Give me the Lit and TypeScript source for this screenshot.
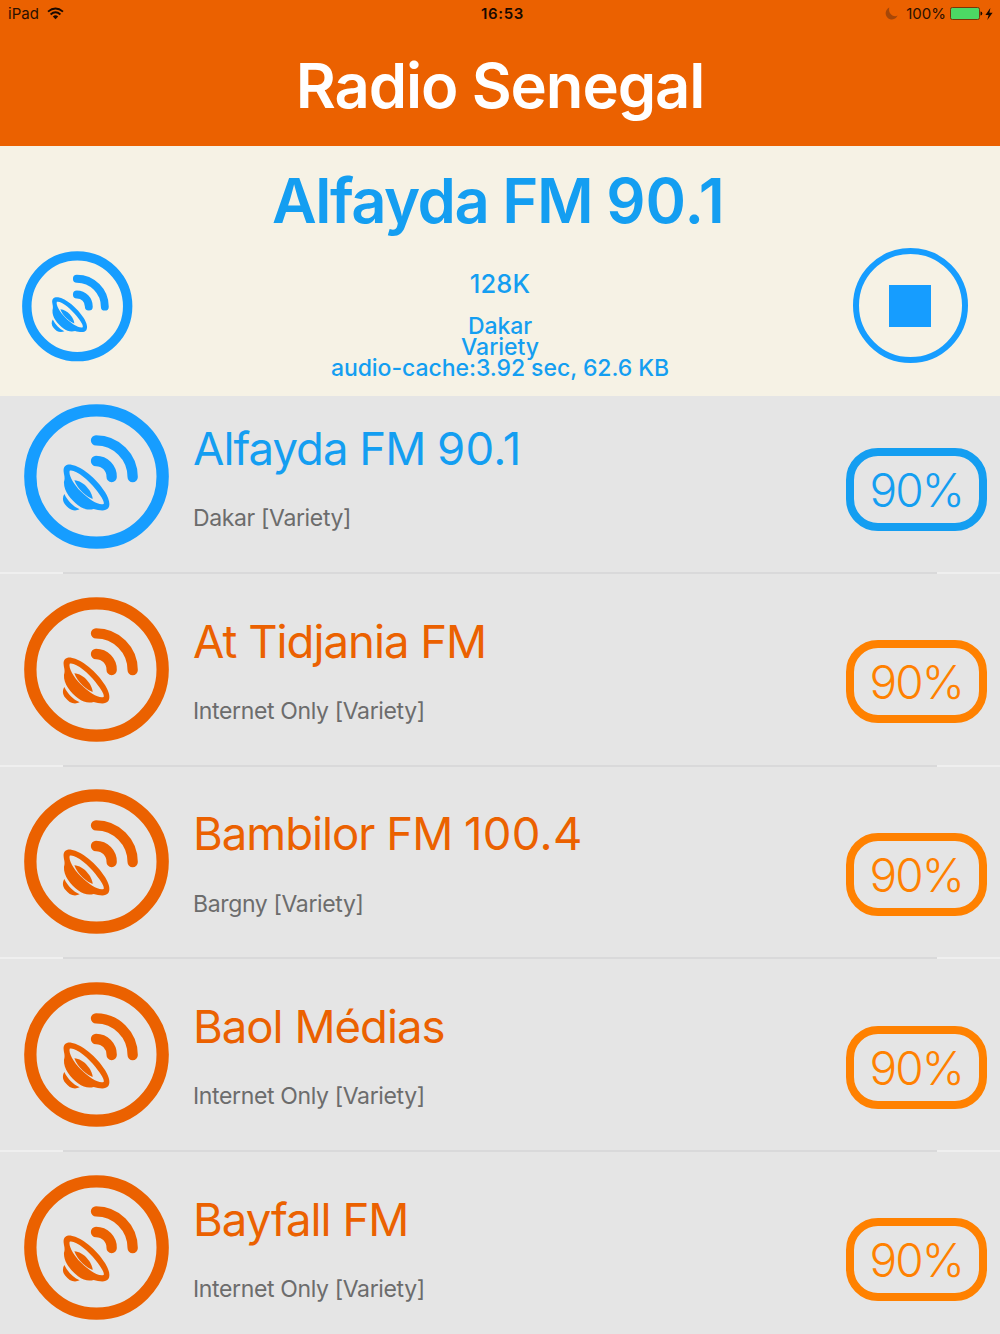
import { LitElement, html, css } from "lit";
import { customElement, property } from "lit/decorators.js";

interface Station {
  name: string;
  frequency?: string;
  place: string;
  genre: string;
  score: number;
}

const STATIONS: Station[] = [
  { name: "Alfayda FM", frequency: "90.1", place: "Dakar", genre: "Variety", score: 90 },
  { name: "At Tidjania FM", place: "Internet Only", genre: "Variety", score: 90 },
  { name: "Bambilor FM", frequency: "100.4", place: "Bargny", genre: "Variety", score: 90 },
  { name: "Baol Médias", place: "Internet Only", genre: "Variety", score: 90 },
  { name: "Bayfall FM", place: "Internet Only", genre: "Variety", score: 90 },
];

@customElement("radio-icon")
class RadioIcon extends LitElement {
  static styles = css`
    :host { display: block; }
    .icon { display: block; width: 100%; height: 100%; }
    .line { fill: none; stroke: currentColor; stroke-linecap: round; }
    .ring { stroke-width: 37; }
    .wave { stroke-width: 31; }
    .solid { fill: currentColor; fill-rule: evenodd; }
  `;
  render() {
    return html`<svg class="icon" viewBox="43 19 435 435">
      <circle class="line ring" cx="260.500" cy="236.500" r="198.500" />
      <path class="line wave" d="M259 128A110 110 0 0 1 369 238M259 190A47 47 0 0 1 306 238" />
      <path class="solid" d="M162 222C160 206 170 199 185 201C215 205 262 244 286 283C298 303 303 320 296 331C288 342 268 338 252 334C238 338 222 336 205 323C183 305 161 280 163 252C167 240 163 232 162 222ZM180 219C197 214 235 245 258 275C275 297 285 312 282 319C268 324 240 308 213 281C192 259 176 232 180 219Z" />
      <path class="solid" d="M194 248C223 250 248 283 249 304C234 300 203 275 194 248Z" />
      <path class="solid" d="M164 289C158 299 158 311 167 321C178 335 192 343 210 335C190 326 175 311 164 289Z" />
    </svg>`;
  }
}

@customElement("app-root")
class AppRoot extends LitElement {
  @property({ type: Number }) playing = 0;

  static styles = css`
    :host {
      display: block;
      width: 1000px;
      height: 1334px;
      overflow: hidden;
      background: #e5e5e5;
      font-family: Inter, "Liberation Sans", sans-serif;
      white-space: nowrap;
    }
    .top { height: 146px; background: #eb6100; color: #fff; }
    .status {
      display: grid;
      grid-template-columns: 1fr auto 1fr;
      align-items: center;
      height: 27px;
      padding: 0 7px 0 8px;
      font-size: 15px;
      color: #2a1000;
    }
    .left, .right { display: flex; align-items: center; }
    .right { justify-content: flex-end; }
    .wifi { width: 17px; height: 13px; margin-left: 8px; }
    .clock { font-weight: 600; color: #180900; letter-spacing: 0.7px; margin-left: 4px; }
    .moon { width: 13px; height: 13px; margin-right: 8px; }
    .battery { width: 33px; height: 13px; margin-left: 4px; }
    .bolt { width: 8px; height: 12px; margin-left: 2px; }
    .title {
      margin: 0;
      padding-top: 22px;
      line-height: 74px;
      text-align: center;
      font-size: 61.5px;
      font-weight: 600;
      letter-spacing: -1.1px;
    }
    .player {
      display: grid;
      grid-template-columns: 200px 1fr 200px;
      height: 250px;
      background: #f6f2e5;
      color: #149ef1;
    }
    .now-icon { width: 110.5px; height: 110.5px; margin: 105px 0 0 22px; color: #169dff; }
    .now { display: flex; flex-direction: column; align-items: center; font-weight: 500; }
    .now-name {
      margin: 18px 3px 0 0;
      line-height: 74px;
      font-size: 61.5px;
      font-weight: 600;
      letter-spacing: -1.5px;
    }
    .now-name .freq { letter-spacing: 0.1px; }
    .rate { margin-top: 31px; line-height: 30px; font-size: 25.5px; letter-spacing: 0.2px; }
    .meta { line-height: 21px; font-size: 23px; letter-spacing: -0.05px; }
    .meta-first { margin-top: 17px; }
    .stop {
      display: flex;
      align-items: center;
      justify-content: center;
      justify-self: end;
      box-sizing: border-box;
      width: 115px;
      height: 115px;
      margin: 102.4px 32px 0 0;
      border: 6px solid #169dff;
      border-radius: 50%;
    }
    .stop-mark { width: 42px; height: 42px; margin: 1px 1px 0 0; background: #169dff; }
    .row {
      display: grid;
      grid-template-columns: 193px 1fr 140px;
      height: 176px;
      padding-right: 14px;
      color: #eb6100;
    }
    .row-icon { width: 145px; height: 145px; margin: 8px 0 0 24px; }
    .name { margin-top: 25px; line-height: 56px; font-size: 45.5px; letter-spacing: -1px; }
    .name .freq { letter-spacing: 0.25px; }
    .place { margin-top: 26.3px; line-height: 30px; font-size: 23px; letter-spacing: -0.36px; color: #6c6c6c; }
    .score {
      display: flex;
      align-items: center;
      justify-content: center;
      box-sizing: border-box;
      width: 140.5px;
      height: 83px;
      margin-top: 51.5px;
      padding-top: 1px;
      border: 8px solid #ff8100;
      border-radius: 32px;
      color: #ff8100;
      font-size: 46px;
      font-weight: 300;
      letter-spacing: -1.9px;
    }
    .playing, .playing .score { color: #149ef1; border-color: #149ef1; }
    .playing .row-icon { color: #169dff; }
    .rule {
      height: 2px;
      margin-bottom: 14.7px;
      background: linear-gradient(to right, #efefef 63px, #d9d9da 63px, #d9d9da 937px, #efefef 937px);
    }
  `;

  label(s: Station) {
    return s.frequency ? html`${s.name} <span class="freq">${s.frequency}</span>` : s.name;
  }

  row(s: Station, i: number) {
    return html`<div class="row ${i === this.playing ? "playing" : ""}">
        <radio-icon class="row-icon"></radio-icon>
        <div class="text">
          <div class="name">${this.label(s)}</div>
          <div class="place">${s.place} [${s.genre}]</div>
        </div>
        <div class="score">${s.score}%</div>
      </div>
      <div class="rule"></div>`;
  }

  render() {
    const now = STATIONS[this.playing];
    return html`
      <header class="top">
        <div class="status">
          <div class="left"><span>iPad</span>
            <svg class="wifi" viewBox="0 0 17 13" fill="none" stroke="#180900" stroke-width="1.900">
              <path d="M1 4.600Q8.500 -1.800 16 4.600M3.600 7.500Q8.500 3.200 13.400 7.500" />
              <path d="M5.800 9.400Q8.500 7 11.200 9.400L8.500 12.200Z" fill="#180900" stroke="none" />
            </svg>
          </div>
          <div class="clock">16:53</div>
          <div class="right">
            <svg class="moon" viewBox="0 0 13 13"><path d="M4.300 .6A6.200 6.200 0 1 0 12.600 8.600C8.400 11 2.800 6.600 4.300 .6Z" fill="#a64708" /></svg>
            <span>100%</span>
            <svg class="battery" viewBox="0 0 33 13">
              <rect x=".5" y=".5" width="29" height="12" rx="1.800" fill="#4cd964" stroke="#7b3507" />
              <path d="M30.500 4.500Q32.300 4.500 32.300 6.500T30.500 8.500Z" fill="#180900" />
            </svg>
            <svg class="bolt" viewBox="0 0 8 12"><path d="M5.400 0L.4 7H3.600L2.300 12L7.600 4.800H4.400Z" fill="#180900" /></svg>
          </div>
        </div>
        <h1 class="title">Radio Senegal</h1>
      </header>
      <section class="player">
        <radio-icon class="now-icon"></radio-icon>
        <div class="now">
          <div class="now-name">${this.label(now)}</div>
          <div class="rate">128K</div>
          <div class="meta meta-first">${now.place}</div>
          <div class="meta">${now.genre}</div>
          <div class="meta">audio-cache:3.92 sec, 62.6 KB</div>
        </div>
        <div class="stop"><div class="stop-mark"></div></div>
      </section>
      <main class="list">${STATIONS.map((s, i) => this.row(s, i))}</main>
    `;
  }
}
